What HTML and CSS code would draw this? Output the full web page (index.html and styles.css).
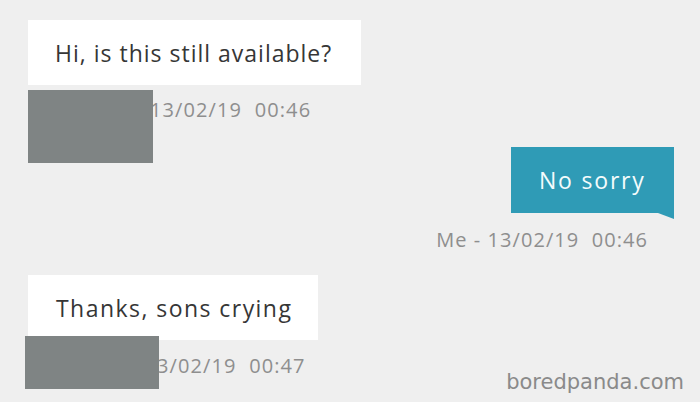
FILE: index.html
```html
<!DOCTYPE html>
<html lang="en">
<head>
    <meta charset="UTF-8">
    <meta name="viewport" content="width=device-width, initial-scale=1.0">
    <title>Chat</title>
    <link rel="stylesheet" href="styles.css">
</head>
<body>
    <div class="chat">
        <div class="msg msg-in first">
            <div class="bubble">Hi, is this still available?</div>
            <div class="meta">
                <span class="stamp stamp-1">13/02/19&nbsp;&nbsp;00:46</span>
                <div class="redact redact-1"></div>
            </div>
        </div>

        <div class="msg msg-out">
            <div class="bubble bubble-out">No sorry</div>
            <div class="meta meta-out">
                <span class="stamp">Me - 13/02/19&nbsp;&nbsp;00:46</span>
            </div>
        </div>

        <div class="msg msg-in third">
            <div class="bubble bubble-short">Thanks, sons crying</div>
            <div class="meta">
                <span class="stamp stamp-3">3/02/19&nbsp;&nbsp;00:47</span>
                <div class="redact redact-3"></div>
            </div>
        </div>
    </div>

    <div class="watermark">boredpanda.com</div>
</body>
</html>
```

FILE: styles.css
```css
body {
    margin: 0;
    padding: 0;
    background-color: #efefef;
    font-family: "Open Sans", "Noto Sans", sans-serif;
    color: #333;
    width: 700px;
    height: 402px;
    overflow: hidden;
    position: relative;
}
.chat {
    display: flex;
    flex-direction: column;
    padding-top: 20px;
}
.msg {
    display: flex;
    flex-direction: column;
}
.msg-in {
    align-items: flex-start;
    padding-left: 28px;
}
.msg-out {
    align-items: flex-end;
    padding-right: 26px;
}
.bubble {
    background: #fff;
    height: 65px;
    box-sizing: border-box;
    padding: 0 27px;
    display: flex;
    align-items: center;
    font-size: 23px;
    letter-spacing: 1px;
    color: #363636;
    width: 333px;
    white-space: nowrap;
}
.bubble-short {
    width: 290px;
    padding-left: 28px;
    letter-spacing: 1.45px;
}
.bubble-out {
    background: #2f9bb6;
    color: #f4fbfc;
    width: 163px;
    height: 66px;
    padding: 0 0 0 28px;
    letter-spacing: 1.8px;
    position: relative;
}
.bubble-out::after {
    content: "";
    position: absolute;
    right: 0;
    bottom: -6px;
    border-left: 16px solid transparent;
    border-top: 6px solid #2f9bb6;
}
.meta {
    position: relative;
    height: 62px;
    width: 100%;
}
.meta-out {
    text-align: right;
    padding-right: 26px;
    box-sizing: border-box;
}
.stamp {
    display: inline-block;
    font-size: 20px;
    letter-spacing: 1.1px;
    color: #8e8e8e;
    margin-top: 11px;
    white-space: nowrap;
}
.meta-out .stamp {
    margin-top: 13px;
    letter-spacing: 1.05px;
}
.stamp-1 {
    margin-left: 122px;
}
.stamp-3 {
    margin-left: 129px;
    margin-top: 12px;
}
.redact {
    position: absolute;
    background: #7f8484;
}
.redact-1 {
    left: 0;
    top: 5px;
    width: 125px;
    height: 73px;
}
.redact-3 {
    left: -3px;
    top: -4px;
    width: 134px;
    height: 53px;
}
.watermark {
    position: absolute;
    right: 16px;
    bottom: 8px;
    font-family: "DejaVu Sans", sans-serif;
    font-size: 21px;
    color: #8a8a8a;
}
```
